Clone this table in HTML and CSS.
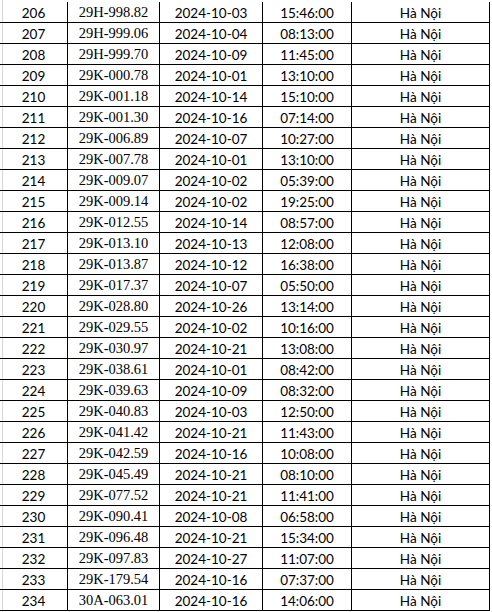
FILE: index.html
```html
<!DOCTYPE html>
<html lang="vi">
<head>
<meta charset="utf-8">
<title>Danh sách</title>
<link rel="stylesheet" href="styles.css">
</head>
<body>
<div class="sheet">
<div class="grid">
<div class="c n">206</div><div class="c p">29H-998.82</div><div class="c n">2024-10-03</div><div class="c n">15:46:00</div><div class="c n">Hà Nội</div>
<div class="c n">207</div><div class="c p">29H-999.06</div><div class="c n">2024-10-04</div><div class="c n">08:13:00</div><div class="c n">Hà Nội</div>
<div class="c n">208</div><div class="c p">29H-999.70</div><div class="c n">2024-10-09</div><div class="c n">11:45:00</div><div class="c n">Hà Nội</div>
<div class="c n">209</div><div class="c p">29K-000.78</div><div class="c n">2024-10-01</div><div class="c n">13:10:00</div><div class="c n">Hà Nội</div>
<div class="c n">210</div><div class="c p">29K-001.18</div><div class="c n">2024-10-14</div><div class="c n">15:10:00</div><div class="c n">Hà Nội</div>
<div class="c n">211</div><div class="c p">29K-001.30</div><div class="c n">2024-10-16</div><div class="c n">07:14:00</div><div class="c n">Hà Nội</div>
<div class="c n">212</div><div class="c p">29K-006.89</div><div class="c n">2024-10-07</div><div class="c n">10:27:00</div><div class="c n">Hà Nội</div>
<div class="c n">213</div><div class="c p">29K-007.78</div><div class="c n">2024-10-01</div><div class="c n">13:10:00</div><div class="c n">Hà Nội</div>
<div class="c n">214</div><div class="c p">29K-009.07</div><div class="c n">2024-10-02</div><div class="c n">05:39:00</div><div class="c n">Hà Nội</div>
<div class="c n">215</div><div class="c p">29K-009.14</div><div class="c n">2024-10-02</div><div class="c n">19:25:00</div><div class="c n">Hà Nội</div>
<div class="c n">216</div><div class="c p">29K-012.55</div><div class="c n">2024-10-14</div><div class="c n">08:57:00</div><div class="c n">Hà Nội</div>
<div class="c n">217</div><div class="c p">29K-013.10</div><div class="c n">2024-10-13</div><div class="c n">12:08:00</div><div class="c n">Hà Nội</div>
<div class="c n">218</div><div class="c p">29K-013.87</div><div class="c n">2024-10-12</div><div class="c n">16:38:00</div><div class="c n">Hà Nội</div>
<div class="c n">219</div><div class="c p">29K-017.37</div><div class="c n">2024-10-07</div><div class="c n">05:50:00</div><div class="c n">Hà Nội</div>
<div class="c n">220</div><div class="c p">29K-028.80</div><div class="c n">2024-10-26</div><div class="c n">13:14:00</div><div class="c n">Hà Nội</div>
<div class="c n">221</div><div class="c p">29K-029.55</div><div class="c n">2024-10-02</div><div class="c n">10:16:00</div><div class="c n">Hà Nội</div>
<div class="c n">222</div><div class="c p">29K-030.97</div><div class="c n">2024-10-21</div><div class="c n">13:08:00</div><div class="c n">Hà Nội</div>
<div class="c n">223</div><div class="c p">29K-038.61</div><div class="c n">2024-10-01</div><div class="c n">08:42:00</div><div class="c n">Hà Nội</div>
<div class="c n">224</div><div class="c p">29K-039.63</div><div class="c n">2024-10-09</div><div class="c n">08:32:00</div><div class="c n">Hà Nội</div>
<div class="c n">225</div><div class="c p">29K-040.83</div><div class="c n">2024-10-03</div><div class="c n">12:50:00</div><div class="c n">Hà Nội</div>
<div class="c n">226</div><div class="c p">29K-041.42</div><div class="c n">2024-10-21</div><div class="c n">11:43:00</div><div class="c n">Hà Nội</div>
<div class="c n">227</div><div class="c p">29K-042.59</div><div class="c n">2024-10-16</div><div class="c n">10:08:00</div><div class="c n">Hà Nội</div>
<div class="c n">228</div><div class="c p">29K-045.49</div><div class="c n">2024-10-21</div><div class="c n">08:10:00</div><div class="c n">Hà Nội</div>
<div class="c n">229</div><div class="c p">29K-077.52</div><div class="c n">2024-10-21</div><div class="c n">11:41:00</div><div class="c n">Hà Nội</div>
<div class="c n">230</div><div class="c p">29K-090.41</div><div class="c n">2024-10-08</div><div class="c n">06:58:00</div><div class="c n">Hà Nội</div>
<div class="c n">231</div><div class="c p">29K-096.48</div><div class="c n">2024-10-21</div><div class="c n">15:34:00</div><div class="c n">Hà Nội</div>
<div class="c n">232</div><div class="c p">29K-097.83</div><div class="c n">2024-10-27</div><div class="c n">11:07:00</div><div class="c n">Hà Nội</div>
<div class="c n">233</div><div class="c p">29K-179.54</div><div class="c n">2024-10-16</div><div class="c n">07:37:00</div><div class="c n">Hà Nội</div>
<div class="c n">234</div><div class="c p">30A-063.01</div><div class="c n">2024-10-16</div><div class="c n">14:06:00</div><div class="c n">Hà Nội</div>
</div>
</div>
</body>
</html>
```

FILE: styles.css
```css
html, body {
  margin: 0;
  padding: 0;
  background: #fff;
}
body {
  width: 492px;
  height: 612px;
  overflow: hidden;
  background-image: linear-gradient(to right, transparent 2px, #d6d6d6 2px, #d6d6d6 3px, transparent 3px);
}
.sheet {
  padding-top: 2px;
}
.grid {
  display: grid;
  grid-template-columns: 68px 92px 103px 89px 138px;
  grid-auto-rows: 21px;
}
.c {
  box-sizing: border-box;
  border-right: 1px solid #000;
  border-bottom: 1px solid #000;
  text-align: center;
  color: #000;
  white-space: nowrap;
  overflow: hidden;
}
.n {
  font-family: Lato, "Liberation Sans", sans-serif;
  font-size: 13.5px;
  line-height: 20px;
  padding-top: 1px;
}
.p {
  font-family: "Liberation Serif", serif;
  font-size: 14.5px;
  line-height: 20px;
}
```
